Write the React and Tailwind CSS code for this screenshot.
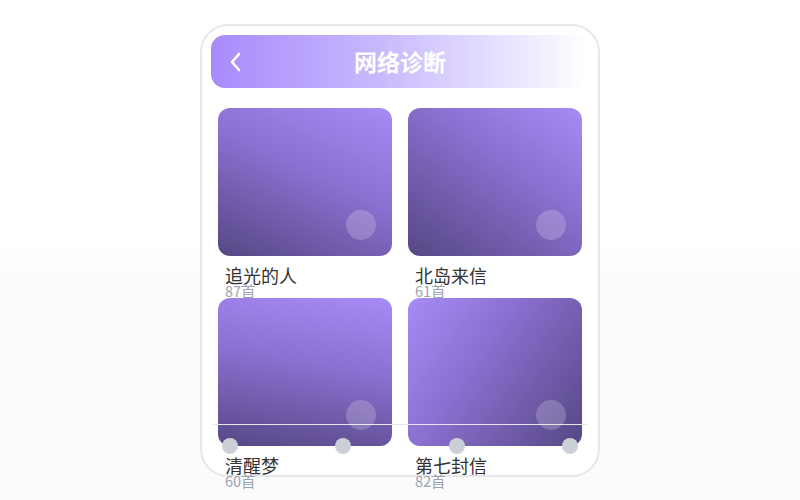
import React from "react";

const items = [
  { t: "追光的人", n: "87首", g: "bg-[linear-gradient(205deg,#a78bf7_0%,#8a70d0_45%,#564784_100%)]" },
  { t: "北岛来信", n: "61首", g: "bg-[linear-gradient(215deg,#a78bf7_0%,#8a70d0_40%,#564784_100%)]" },
  { t: "清醒梦", n: "60首", g: "bg-[linear-gradient(190deg,#a78bf7_0%,#8a70d0_45%,#574785_100%)]" },
  { t: "第七封信", n: "82首", g: "bg-[linear-gradient(125deg,#a78bf7_0%,#8a70d0_40%,#564784_100%)]" },
];

export default function App() {
  return (
    <div
      className="w-full h-[500px] flex justify-center pt-[24px] bg-[linear-gradient(to_bottom,#ffffff_48%,#fcfcfd_55%,#fbfbfc)]"
      style={{ fontFamily: '"Noto Sans CJK SC", "Noto Sans", sans-serif' }}
    >
      <div className="relative w-[400px] h-[453px] rounded-[28px] border-2 border-[#e6e7eb] bg-white p-[9px]">
        <div className="relative h-[53px] rounded-[14px] bg-[linear-gradient(to_right,#a78bfa_0%,#c8b9fd_45%,#ffffff_100%)] flex items-center justify-center">
          <svg
            className="absolute left-[18px] top-[17px]"
            width="14"
            height="20"
            viewBox="0 0 14 20"
            fill="none"
          >
            <path d="M10 2 L3 10 L10 18" stroke="white" strokeWidth="2.6" strokeLinecap="round" strokeLinejoin="round" />
          </svg>
          <span className="text-white font-bold text-[23px] leading-none">网络诊断</span>
        </div>
        <div className="mt-5 px-[7px] grid grid-cols-2 gap-x-4">
          {items.map((it) => (
            <div key={it.t} className="flex flex-col">
              <div className={`relative h-[148px] rounded-[12px] ${it.g}`}>
                <div className="absolute right-[16px] bottom-[16px] w-[30px] h-[30px] rounded-full bg-white/20" />
              </div>
              <div className="pl-[7px] mt-[10px] text-[18px] leading-[18px] text-[#333333]">{it.t}</div>
              <div className="pl-[7px] text-[14.5px] leading-[14px] text-[#9ca3af]">{it.n}</div>
            </div>
          ))}
        </div>
        <div className="absolute left-[10px] top-[398px] w-[376px]">
          <div className="h-px bg-[#e5e7eb]" />
          <div className="mt-[13px] px-[10px] flex justify-between">
            <div className="w-4 h-4 rounded-full bg-[#cbd0d6]" />
            <div className="w-4 h-4 rounded-full bg-[#cbd0d6]" />
            <div className="w-4 h-4 rounded-full bg-[#cbd0d6]" />
            <div className="w-4 h-4 rounded-full bg-[#cbd0d6]" />
          </div>
        </div>
      </div>
    </div>
  );
}
